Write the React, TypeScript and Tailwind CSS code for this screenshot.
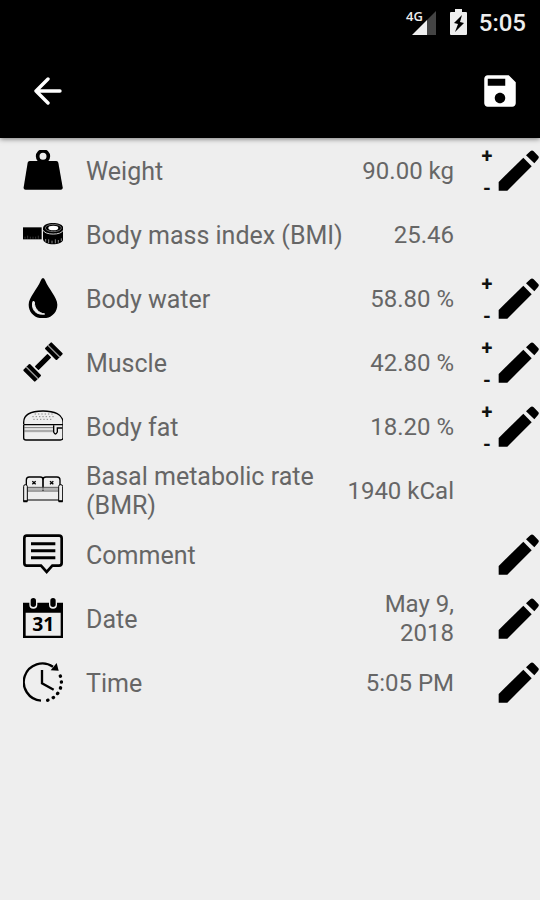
import type { ReactNode } from "react";

function WeightIcon() {
  return (
    <svg className="size-10" viewBox="0 0 120 120" aria-hidden="true">
      <circle cx="60" cy="19" r="16" fill="none" stroke="#000" strokeWidth="11" />
      <path d="M20 33H100Q105 33 106 38L119 112Q120 119 113 119H8Q1 119 2 112L14 38Q15 33 20 33Z" />
    </svg>
  );
}

function TapeIcon() {
  return (
    <svg className="size-10" viewBox="0 0 120 120" aria-hidden="true">
      <path d="M0 40H56V76H0Z" />
      <path d="M6 74V68M14 74V65M22 74V68M30 74V68M38 74V68M46 74V65" stroke="#555" strokeWidth="2" />
      <path d="M60 43C60 22 121 22 121 43V74C121 96 60 96 60 74Z" />
      <ellipse cx="91" cy="42" rx="24" ry="11" fill="none" stroke="#999" strokeWidth="2" />
      <ellipse cx="91" cy="42" rx="15" ry="7" fill="#fff" />
      <path d="M61 49C65 64 116 64 120 49" fill="none" stroke="#ccc" strokeWidth="3" />
      <path d="M68 83V75M77 87V76M87 88V80M97 88V76M106 86V78M115 81V73" stroke="#888" strokeWidth="3" />
    </svg>
  );
}

function DropIcon() {
  return (
    <svg className="size-10" viewBox="0 0 120 120" aria-hidden="true">
      <path d="M60 0Q64 0 67 8C76 32 103 57 103 80C103 104 84 121 60 121S17 104 17 80C17 57 44 32 53 8Q56 0 60 0Z" />
      <path d="M29 73C25 96 40 112 65 108C46 105 34 91 34 72Q31 66 29 73Z" fill="#eee" stroke="#eee" strokeWidth="3" />
    </svg>
  );
}

function DumbbellIcon() {
  return (
    <svg className="size-10" viewBox="0 0 120 120" aria-hidden="true">
      <g transform="rotate(-45 60 60)">
        <rect x="33" y="52" width="54" height="16" rx="2" />
        <rect x="0" y="35" width="28" height="50" rx="3" />
        <rect x="92" y="35" width="28" height="50" rx="3" />
        <path d="M14 35V85M106 35V85" stroke="#999" strokeWidth="4" />
      </g>
    </svg>
  );
}

function BurgerIcon() {
  return (
    <svg className="size-10" viewBox="0 0 120 120" fill="none" stroke="#000" aria-hidden="true">
      <path d="M2 55V49C2 25 27 15 60 15S120 25 120 49V55" strokeWidth="4" />
      <path d="M2 56H120" strokeWidth="4" />
      <path d="M4 65H90" stroke="#777" strokeWidth="3" />
      <path d="M4 75H90" stroke="#aaa" strokeWidth="7" />
      <path d="M2 56V96Q2 102 9 102H112Q120 102 120 96V56" strokeWidth="4" />
      <path d="M92 58V78Q97 90 103 78V66H118" strokeWidth="4" />
      <path d="M35 24H90M28 32H94M31 40H88" stroke="#888" strokeWidth="3" strokeDasharray="4 6" />
    </svg>
  );
}

function SofaIcon() {
  return (
    <svg className="size-10" viewBox="0 0 120 120" fill="none" stroke="#000" aria-hidden="true">
      <path d="M10 45V30Q10 21 19 21H52Q60 21 60 29Q60 21 69 21H102Q111 21 111 30V45" strokeWidth="4" />
      <path d="M60 24V62" strokeWidth="5" />
      <path d="M14 52H105M14 63H105" stroke="#555" strokeWidth="3" />
      <path d="M14 57H105" stroke="#aaa" strokeWidth="5" />
      <path d="M13 90H107" strokeWidth="3" />
      <path d="M2 94V49Q2 44 7 44T13 49V94ZM107 94V49Q107 44 113 44T119 49V94Z" strokeWidth="3" />
      <path d="M1 94H13M107 94H119" strokeWidth="6" />
      <path d="M28 34L38 43M38 34L28 43M81 34L91 43M91 34L81 43" strokeWidth="4" />
    </svg>
  );
}

function CommentIcon() {
  return (
    <svg className="size-10" viewBox="0 0 120 120" fill="none" stroke="#000" aria-hidden="true">
      <path d="M11 5H108Q116 5 116 13V87Q116 95 108 95H88L71 114L54 95H11Q4 95 4 87V13Q4 5 11 5Z" strokeWidth="8" />
      <path d="M24 29H97M24 50H97M24 71H97" strokeWidth="9" />
    </svg>
  );
}

function CalendarIcon() {
  return (
    <svg className="size-10" viewBox="0 0 120 120" aria-hidden="true">
      <path d="M0 14H121V120H0ZM8 44V113H113V44Z" fillRule="evenodd" />
      <rect x="19" y="-4" width="24" height="36" rx="12" fill="#eee" />
      <rect x="78" y="-4" width="24" height="36" rx="12" fill="#eee" />
      <rect x="23" y="0" width="16" height="27" rx="8" />
      <rect x="82" y="0" width="16" height="27" rx="8" />
      <text x="61" y="98" textAnchor="middle" className="font-['Open_Sans',sans-serif] text-[58px] font-bold">31</text>
    </svg>
  );
}

function ClockIcon() {
  return (
    <svg className="size-10" viewBox="0 0 120 120" fill="none" stroke="#000" aria-hidden="true">
      <path d="M54 116A56 56 0 1 1 90 14" strokeWidth="7" />
      <path d="M101 3L107 26L83 25Z" fill="#000" stroke="none" />
      <path d="M57 24V64L92 83" strokeWidth="7" />
      <path d="M112 42A56 56 0 0 1 68 116" strokeWidth="10" strokeLinecap="round" strokeDasharray="1 17" />
    </svg>
  );
}

function PencilIcon() {
  return (
    <svg className="size-full" viewBox="0 0 123 123" aria-hidden="true">
      <path d="M2 96L76 23L101 49L28 122H2Z" />
      <path d="M84 16L97 4Q102 -1 107 4L120 17Q125 22 120 27L109 40Z" />
    </svg>
  );
}

type Row = {
  label: string;
  value?: string;
  icon: ReactNode;
  steps?: boolean;
  edit?: boolean;
};

const rows: Row[] = [
  { label: "Weight", value: "90.00 kg", icon: <WeightIcon />, steps: true, edit: true },
  { label: "Body mass index (BMI)", value: "25.46", icon: <TapeIcon /> },
  { label: "Body water", value: "58.80 %", icon: <DropIcon />, steps: true, edit: true },
  { label: "Muscle", value: "42.80 %", icon: <DumbbellIcon />, steps: true, edit: true },
  { label: "Body fat", value: "18.20 %", icon: <BurgerIcon />, steps: true, edit: true },
  { label: "Basal metabolic rate (BMR)", value: "1940 kCal", icon: <SofaIcon /> },
  { label: "Comment", icon: <CommentIcon />, edit: true },
  { label: "Date", value: "May 9, 2018", icon: <CalendarIcon />, edit: true },
  { label: "Time", value: "5:05 PM", icon: <ClockIcon />, edit: true },
];

function StatusBar() {
  return (
    <div className="flex h-11 items-center justify-end pr-3.5 text-[#eee]">
      <svg className="mr-3.5 h-7 w-8" viewBox="0 0 32 28" aria-label="4G signal">
        <path d="M8 27L23 12V27Z" fill="#eee" />
        <path d="M23 12L32 3V27H23Z" fill="#444" />
        <text x="2" y="13" fill="#eee" className="font-['Open_Sans',sans-serif] text-[13px] font-semibold">4G</text>
      </svg>
      <svg className="mr-3 h-7 w-[17px]" viewBox="0 0 17 28" aria-label="Battery charging">
        <path d="M5 1H12V4H16Q17 4 17 5V26Q17 27 16 27H1Q0 27 0 26V5Q0 4 1 4H5Z" fill="#eee" />
        <path d="M12 7L4 15L8 16L5 24L14 15L10 14Z" fill="#000" />
      </svg>
      <span className="pt-0.5 text-2xl font-medium">5:05</span>
    </div>
  );
}

function Entry({ row }: { row: Row }) {
  return (
    <li className="flex h-16 items-center pl-[23px] leading-[29px] text-[#666]">
      {row.icon}
      <span className="ml-[23px] min-w-0 flex-1 pt-0.5 text-[25px]">{row.label}</span>
      <span className="w-[108px] pt-0.5 text-right text-[24px]">{row.value}</span>
      <div className="ml-[22px] flex w-[22px] flex-col pt-1 text-xl font-bold text-[#111]">
        {row.steps && (
          <>
            <button className="h-8" aria-label={`Increase ${row.label}`}>+</button>
            <button className="h-8" aria-label={`Decrease ${row.label}`}>-</button>
          </>
        )}
      </div>
      <div className="mr-px size-[41px]">
        {row.edit && (
          <button className="block size-full" aria-label={`Edit ${row.label}`}>
            <PencilIcon />
          </button>
        )}
      </div>
    </li>
  );
}

export default function App() {
  return (
    <div className="min-h-screen bg-[#eee] font-[Roboto,sans-serif]">
      <header className="bg-black shadow-[0_1px_5px_rgba(0,0,0,0.5)]">
        <StatusBar />
        <div className="flex h-[94px] items-center justify-between pr-[19px] pl-[34px] text-white">
          <button aria-label="Back">
            <svg className="block size-7" viewBox="0 0 28 28" fill="none" stroke="currentColor" strokeWidth="3.4" strokeLinecap="round" strokeLinejoin="round">
              <path d="M14 2L2 14L14 26M2 14H26" />
            </svg>
          </button>
          <button aria-label="Save">
            <svg className="block size-[42px]" viewBox="0 0 24 24" fill="currentColor">
              <path d="M17 3H5c-1.11 0-2 .9-2 2v14c0 1.1.89 2 2 2h14c1.1 0 2-.9 2-2V7l-4-4zm-5 16c-1.66 0-3-1.34-3-3s1.34-3 3-3 3 1.34 3 3-1.34 3-3 3zm3-10H5V5h10v4z" />
            </svg>
          </button>
        </div>
      </header>
      <main>
        <ul>
          {rows.map((row) => (
            <Entry key={row.label} row={row} />
          ))}
        </ul>
      </main>
    </div>
  );
}
